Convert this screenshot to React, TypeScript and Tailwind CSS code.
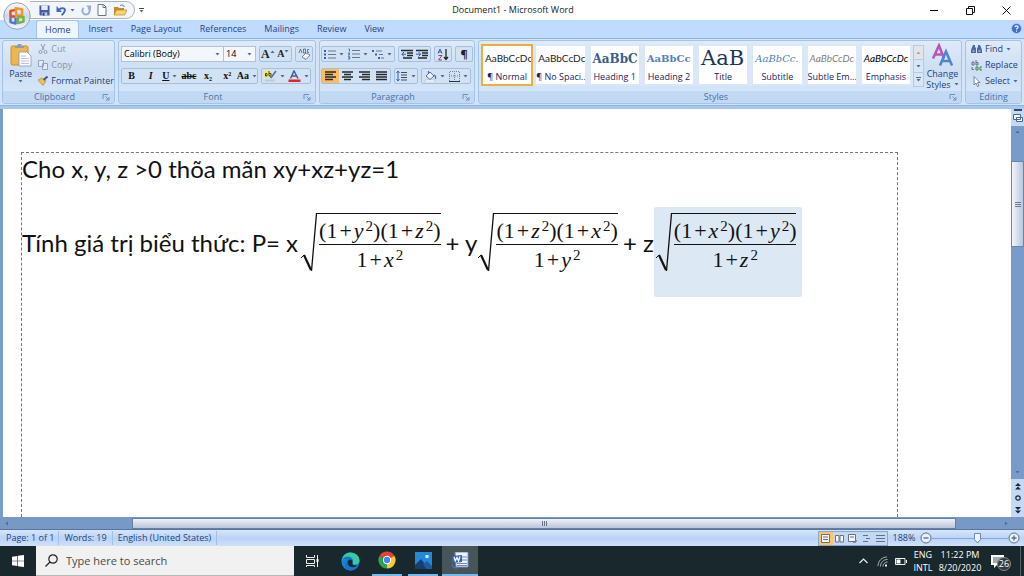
import React from "react";

type StyleItem = {
  name: string;
  sample: string;
  look: string;
  active?: boolean;
};

const tabs = ["Home", "Insert", "Page Layout", "References", "Mailings", "Review", "View"];

const styleItems: StyleItem[] = [
  { name: "¶ Normal", sample: "AaBbCcDc", look: "font-['Lato',sans-serif] text-[10px] text-[#222]", active: true },
  { name: "¶ No Spaci...", sample: "AaBbCcDc", look: "font-['Lato',sans-serif] text-[10px] text-[#222]" },
  { name: "Heading 1", sample: "AaBbC", look: "font-['DejaVu_Serif',serif] text-[12px] font-bold text-[#365f91]" },
  { name: "Heading 2", sample: "AaBbCc", look: "font-['DejaVu_Serif',serif] text-[10px] font-bold text-[#4f81bd]" },
  { name: "Title", sample: "AaB", look: "font-['DejaVu_Serif',serif] text-[21px] text-[#17365d]" },
  { name: "Subtitle", sample: "AaBbCc.", look: "font-['DejaVu_Serif',serif] text-[10px] italic text-[#4f81bd]" },
  { name: "Subtle Em...", sample: "AaBbCcDc", look: "font-['Lato',sans-serif] text-[10px] italic text-[#808080]" },
  { name: "Emphasis", sample: "AaBbCcDc", look: "font-['Lato',sans-serif] text-[10px] italic text-black" },
];

const Caret: React.FC<{ className?: string }> = ({ className = "" }) => (
  <svg aria-hidden viewBox="0 0 5 3" className={`h-[3px] w-[5px] shrink-0 ${className}`}>
    <path d="M0.5 0h4L2.5 2.6z" fill="#4f6b95" />
  </svg>
);

const Launcher: React.FC = () => (
  <button aria-label="More options" className="h-[8px] w-[8px]">
    <svg viewBox="0 0 8 8" className="h-[8px] w-[8px]" fill="none" stroke="#6d8fbe">
      <path d="M1 6V1.5h5M3.500 3.500l3 3M7 4v3H4" />
    </svg>
  </button>
);

const Group: React.FC<{
  label: string;
  className: string;
  launcher?: boolean;
  children: React.ReactNode;
}> = ({ label, className, launcher = true, children }) => (
  <section
    aria-label={label}
    className={`flex h-[64px] flex-col overflow-hidden rounded-[3px] border border-[#a3c3ea] bg-linear-to-b from-[#dfeaf8] via-[#ccdef3] to-[#d9eafd] ${className}`}
  >
    <div className="flex min-h-0 flex-1">{children}</div>
    <div className="flex h-[12px] items-center bg-[#c1d9f2] px-1 text-[9px] leading-[12px] text-[#4a6fa8]">
      <span className="flex-1 text-center">{label}</span>
      {launcher && <Launcher />}
    </div>
  </section>
);

const Cluster: React.FC<{ children: React.ReactNode; className?: string }> = ({ children, className = "" }) => (
  <div className={`flex h-[16px] items-stretch rounded-[2px] border border-[#a4bfe0] bg-[#d2e2f5] ${className}`}>
    {children}
  </div>
);

const Tool: React.FC<{ label: string; className?: string; children: React.ReactNode }> = ({
  label,
  className = "",
  children,
}) => (
  <button aria-label={label} className={`flex flex-1 items-center justify-center gap-[3px] ${className}`}>
    {children}
  </button>
);

const Lines: React.FC<{ kind: "left" | "center" | "right" | "justify" }> = ({ kind }) => {
  const d = {
    left: "M0 1h11M0 3.500h8M0 6h11M0 8.500h8",
    center: "M0 1h11M2 3.500h7M0 6h11M2 8.500h7",
    right: "M0 1h11M3 3.500h8M0 6h11M3 8.500h8",
    justify: "M0 1h11M0 3.500h11M0 6h11M0 8.500h11",
  }[kind];
  return (
    <svg viewBox="0 0 11 10" className="h-[10px] w-[11px]">
      <path d={d} stroke="#26282c" strokeWidth="1.4" />
    </svg>
  );
};

const ListIcon: React.FC<{ multi?: boolean }> = ({ multi }) => (
  <svg viewBox="0 0 12 11" className="h-[11px] w-[12px]">
    <path d={multi ? "M0 2h2M3 5.500h2M6 9h2" : "M0 2h2M0 5.500h2M0 9h2"} stroke="#3560b0" strokeWidth="2" />
    <path d={multi ? "M4 2h6M7 5.500h4M9 9h3" : "M4 2h8M4 5.500h8M4 9h8"} stroke="#6a7689" />
  </svg>
);

const NumberIcon: React.FC = () => (
  <svg viewBox="0 0 12 12" className="h-[12px] w-[12px]" fill="none">
    <path d="M0.500 1h1v2.500M0 5h1.800L0.300 7h1.700M0 8.700h1.700v2.300H0M0.500 9.900h1" stroke="#3560b0" strokeWidth=".9" />
    <path d="M4 2.500h8M4 6h8M4 9.500h8" stroke="#6a7689" />
  </svg>
);

const IndentIcon: React.FC<{ out?: boolean }> = ({ out }) => (
  <svg viewBox="0 0 12 11" className="h-[11px] w-[12px]">
    <path d="M0 1.500h12M6 4h6M6 6.500h6M2 9h9" stroke="#25282e" strokeWidth="1.300" />
    <path d={out ? "M5 5.200H1M3 3L0.800 5.200 3 7.500" : "M0 5.200h4M2.500 3l2.200 2.200L2.500 7.500"} stroke="#2c57b0" fill="none" />
  </svg>
);

const TitleBar: React.FC = () => (
  <header className="flex h-5 items-center bg-white">
    <div className="flex h-5 w-[148px] items-center">
      <div className="ml-[30px] flex h-[18px] items-center gap-[6px] rounded-r-full border border-l-0 border-[#a9b4c4] bg-[#f2f5fa] pr-[7px] pl-[9px]">
        <button aria-label="Save">
          <svg viewBox="0 0 12 12" className="h-[11px] w-[11px]">
            <path d="M0.500 0.500h11v11h-10l-1-1z" fill="#4357b5" />
            <path d="M2.500 0.500h7v5h-7z" fill="#e8efff" />
            <path d="M3 8h6v3.500H3z" fill="#c4cbe8" />
            <path d="M4 8.500h2v3H4z" fill="#26357f" />
          </svg>
        </button>
        <button aria-label="Undo" className="flex items-center gap-[3px]">
          <svg viewBox="0 0 11 11" className="h-[11px] w-[11px]" fill="none">
            <path d="M3 4.500C7 2 10 3.500 8.500 6.500 8 8 6.500 9.500 5.500 10" stroke="#4568c4" strokeWidth="2" />
            <path d="M0.500 1v6h5.500z" fill="#4568c4" />
          </svg>
          <Caret />
        </button>
        <button aria-label="Repeat">
          <svg viewBox="0 0 10 11" className="h-[11px] w-[10px]" fill="none">
            <path d="M2.500 3C0 6 2 9.500 5 9.500S10 6 7.500 3" stroke="#98aed4" strokeWidth="2" />
            <path d="M5 0.500h5v5z" fill="#98aed4" />
          </svg>
        </button>
        <button aria-label="New">
          <svg viewBox="0 0 10 12" className="h-[12px] w-[10px]">
            <path d="M1 0.500h5.500L9 3v8.500H1z" fill="#fff" stroke="#68789a" />
            <path d="M6 0.500V3.500h3" fill="none" stroke="#68789a" />
          </svg>
        </button>
        <button aria-label="Open">
          <svg viewBox="0 0 14 12" className="h-[12px] w-[14px]">
            <path d="M1 3h4l1 1h5v7H1z" fill="#c58b28" />
            <path d="M3.500 6H14l-2.500 5H1z" fill="#ffd567" stroke="#b98525" strokeWidth=".7" />
            <path d="M7 2c2-2 4-1 4 1" stroke="#55709f" fill="none" />
          </svg>
        </button>
      </div>
      <button aria-label="Customize toolbar" className="ml-[4px] flex flex-col items-center gap-px">
        <span className="h-px w-[5px] bg-[#3c4b66]" />
        <Caret />
      </button>
    </div>
    <h1 className="flex-1 text-center text-[9px] text-[#222]">Document1 - Microsoft Word</h1>
    <div className="flex h-5 w-[146px] justify-end">
      <button aria-label="Minimize" className="flex w-9 items-center justify-center">
        <span className="h-px w-[8px] bg-black" />
      </button>
      <button aria-label="Restore" className="flex w-9 items-center justify-center">
        <svg viewBox="0 0 9 9" className="h-[9px] w-[9px]" fill="none" stroke="#111">
          <path d="M0.500 2.500h6v6h-6zM2.500 2.500v-2h6v6h-2" />
        </svg>
      </button>
      <button aria-label="Close" className="flex w-9 items-center justify-center">
        <svg viewBox="0 0 9 9" className="h-[9px] w-[9px]" fill="none" stroke="#111">
          <path d="M0.500 0.500l8 8M8.500 0.500l-8 8" />
        </svg>
      </button>
    </div>
  </header>
);

const OfficeButton: React.FC = () => (
  <button aria-label="Office Button" className="absolute top-[2px] left-[3px] z-10">
    <svg viewBox="0 0 30 30" className="h-[28px] w-[28px]">
      <defs>
        <linearGradient id="orb" x1="0" y1="0" x2="0" y2="1">
          <stop offset="0" stopColor="#fbfcfe" />
          <stop offset=".5" stopColor="#cfd8e6" />
          <stop offset="1" stopColor="#f2f6fc" />
        </linearGradient>
      </defs>
      <circle cx="15" cy="15" r="14.200" fill="url(#orb)" stroke="#8d9db5" />
      <g fill="none" strokeWidth="2.600" strokeLinejoin="round">
        <path d="M13.500 8.500L8 9.500v6h5.500" stroke="#dd4f22" />
        <path d="M13.500 6.500l7 1.500v6.500h-6z" stroke="#f0972a" />
        <path d="M8 16.500v5l5.500 1.500v-6" stroke="#4a78d0" />
        <path d="M16 16h6v5l-6 1.500z" stroke="#74b443" />
      </g>
    </svg>
  </button>
);

const TabRow: React.FC = () => (
  <nav className="flex h-[18px] items-end bg-[#bfdbff] pr-[2px] pl-[36px] text-[9px] text-[#1f4487]">
    {tabs.map((t, i) => (
      <a
        key={t}
        href={`#${t}`}
        className={
          i === 0
            ? "flex h-[18px] items-center rounded-t-[3px] border border-b-0 border-[#a5c2e8] bg-[#eff5fd] px-2"
            : "flex h-[18px] items-center px-[9px]"
        }
      >
        {t}
      </a>
    ))}
    <button aria-label="Help" className="mb-[4px] ml-auto">
      <svg viewBox="0 0 12 12" className="h-[11px] w-[11px]">
        <circle cx="6" cy="6" r="5.500" fill="#3f6fd0" stroke="#b9cdf0" />
        <path d="M4.300 4.500C4.500 2.500 8 2.700 7.700 4.700 7.500 5.700 6 5.800 6 7.200M6 8.300v1.200" stroke="#fff" strokeWidth="1.200" fill="none" />
      </svg>
    </button>
  </nav>
);

const Ribbon: React.FC = () => (
  <div className="mb-[3px] flex gap-[3px] border-y border-[#8db2e3] bg-[#d3e4f8] px-[2px] py-px text-[9px] text-[#1f3f7d]">
    <Group label="Clipboard" className="w-[113px]">
      <button className="flex w-[38px] flex-col items-center pt-[2px]">
        <svg viewBox="0 0 22 24" className="h-[24px] w-[22px]">
          <rect x="1" y="3" width="17" height="19" rx="1.500" fill="#eeb64f" stroke="#c68c31" />
          <path d="M5 5V3h2l1-2h3l1 2h2v2z" fill="#8e9bb0" />
          <path d="M9 9h8l4 4v10H9z" fill="#fbfcff" stroke="#8399c0" strokeWidth=".8" />
          <path d="M11 13h5M11 15.500h8M11 18h8M11 20.500h8" stroke="#a6b6d4" strokeWidth=".8" />
        </svg>
        <span className="leading-[13px]">Paste</span>
        <Caret />
      </button>
      <div className="flex flex-1 flex-col leading-[16px]">
        <button className="flex h-[16px] items-center gap-[3px] text-[#8d95a3]">
          <svg viewBox="0 0 10 10" className="h-[10px] w-[10px]" fill="none" stroke="#8f9bae">
            <path d="M3 0l3 6M7 0L4 6" />
            <circle cx="2.500" cy="8" r="1.500" />
            <circle cx="7.500" cy="8" r="1.500" />
          </svg>
          Cut
        </button>
        <button className="flex h-[16px] items-center gap-[3px] text-[#8d95a3]">
          <svg viewBox="0 0 10 10" className="h-[10px] w-[10px]" fill="#e6ebf3" stroke="#96a3b8">
            <path d="M0.500 0.500h5v6h-5zM4.500 3.500h5v6h-5z" />
          </svg>
          Copy
        </button>
        <button className="flex h-[16px] items-center gap-[2px] whitespace-nowrap">
          <svg viewBox="0 0 11 10" className="h-[10px] w-[11px]">
            <path d="M0 4l4-2 4 3-3 4.500z" fill="#f0c24e" stroke="#a47a1f" strokeWidth=".6" />
            <path d="M5.500 4l4-3.500" stroke="#44528a" strokeWidth="2" />
          </svg>
          Format Painter
        </button>
      </div>
    </Group>

    <Group label="Font" className="w-[198px]">
      <div className="flex flex-1 flex-col gap-[6px] px-[2px] pt-[5px]">
        <div className="flex gap-[3px]">
          <div className="flex h-[16px] border border-[#abc1de] bg-[#f3f7fc] text-black">
            <label className="flex w-[101px] items-center pr-[3px]">
              <select aria-label="Font name" className="h-[14px] flex-1 appearance-none pl-[2px] text-[9px] leading-[14px]">
                <option>Calibri (Body)</option>
              </select>
              <Caret />
            </label>
            <label className="flex w-[32px] items-center border-l border-[#abc1de] pr-[3px]">
              <select aria-label="Font size" className="h-[14px] w-5 flex-1 appearance-none pl-[2px] text-[9px] leading-[14px]">
                <option>14</option>
              </select>
              <Caret />
            </label>
          </div>
          <Cluster className="w-[33px] font-['Liberation_Serif',serif] font-bold text-[#222]">
            <button aria-label="Grow font" className="flex flex-1 items-center justify-center">
              <span className="text-[12px] leading-none">A</span>
              <Caret className="mb-[6px] rotate-180" />
            </button>
            <button aria-label="Shrink font" className="flex flex-1 items-center justify-center">
              <span className="text-[10px] leading-none">A</span>
              <Caret className="mb-[6px]" />
            </button>
          </Cluster>
          <Cluster className="w-[18px]">
            <Tool label="Clear formatting">
              <svg viewBox="0 0 13 12" className="h-[12px] w-[13px]">
                <path d="M1 5l1.500-4L4 5M5.500 1v4h2v-4zM11 1.500H9.500v3H11" stroke="#536078" fill="none" strokeWidth=".8" />
                <path d="M4 9l4-4 4 2-4 4.500z" fill="#f4f6fb" stroke="#5d6d8e" strokeWidth=".8" />
              </svg>
            </Tool>
          </Cluster>
        </div>
        <div className="flex gap-[3px]">
          <Cluster className="w-[137px] font-['Liberation_Serif',serif] text-[10px] leading-none text-[#111]">
            <Tool label="Bold"><b className="font-black">B</b></Tool>
            <Tool label="Italic"><i className="font-bold">I</i></Tool>
            <Tool label="Underline"><u className="font-bold">U</u><Caret /></Tool>
            <Tool label="Strikethrough"><s className="font-bold">abc</s></Tool>
            <Tool label="Subscript"><b>x₂</b></Tool>
            <Tool label="Superscript"><b>x²</b></Tool>
            <Tool label="Change case"><b>Aa</b><Caret /></Tool>
          </Cluster>
          <Cluster className="w-[50px]">
            <Tool label="Highlight">
              <svg viewBox="0 0 13 12" className="h-[12px] w-[13px]">
                <path d="M0 1h8v6H0z" fill="#f8ee4e" />
                <path d="M1.500 3.500h1.500v2.500H1.500zM5 1v5h2V3.500H5" fill="none" stroke="#333" strokeWidth=".9" />
                <path d="M12 1L8 6.500 6.500 8" stroke="#596e96" strokeWidth="1.600" />
                <path d="M1 9.500h10v2H1z" fill="#c5c9cf" />
              </svg>
              <Caret />
            </Tool>
            <Tool label="Font color">
              <svg viewBox="0 0 13 12" className="h-[12px] w-[13px]">
                <path d="M2.500 8.500L6 1l4 7.500M4 6h5" fill="none" stroke="#3c5da0" strokeWidth="1.500" />
                <path d="M0.500 9.500h12V12H0.500z" fill="#ef1c24" />
              </svg>
              <Caret />
            </Tool>
          </Cluster>
        </div>
      </div>
    </Group>

    <Group label="Paragraph" className="w-[156px]">
      <div className="flex flex-1 flex-col gap-[6px] px-[1px] pt-[5px]">
        <div className="flex gap-[3px]">
          <Cluster className="w-[74px]">
            <Tool label="Bullets"><ListIcon /><Caret /></Tool>
            <Tool label="Numbering"><NumberIcon /><Caret /></Tool>
            <Tool label="Multilevel list"><ListIcon multi /><Caret /></Tool>
          </Cluster>
          <Cluster className="w-[33px]">
            <Tool label="Decrease indent"><IndentIcon out /></Tool>
            <Tool label="Increase indent"><IndentIcon /></Tool>
          </Cluster>
          <Cluster className="w-[18px]">
            <Tool label="Sort">
              <svg viewBox="0 0 12 13" className="h-[13px] w-[12px]" fill="none">
                <path d="M1 5.500L3 1l2 4.500M1.500 4h3" stroke="#3659a8" />
                <path d="M1.500 7.500H5L1.500 12H5" stroke="#a33c5c" />
                <path d="M9 1v10M7 9l2 2.500L11 9" stroke="#222" strokeWidth="1.300" />
              </svg>
            </Tool>
          </Cluster>
          <Cluster className="w-[18px] text-[11px] font-bold text-[#222]">
            <Tool label="Show marks">¶</Tool>
          </Cluster>
        </div>
        <div className="flex gap-[3px]">
          <Cluster className="w-[70px]">
            <Tool label="Align left" className="bg-[#fbbd62]"><Lines kind="left" /></Tool>
            <Tool label="Center"><Lines kind="center" /></Tool>
            <Tool label="Align right"><Lines kind="right" /></Tool>
            <Tool label="Justify"><Lines kind="justify" /></Tool>
          </Cluster>
          <Cluster className="w-[24px]">
            <Tool label="Line spacing">
              <svg viewBox="0 0 12 12" className="h-[12px] w-[12px]" fill="none">
                <path d="M2 1v10M0.500 3L2 1l1.500 2M0.500 9L2 11l1.500-2" stroke="#3560b0" />
                <path d="M5 2.500h6M5 5h6M5 7.500h6M5 10h6" stroke="#444c59" />
              </svg>
              <Caret />
            </Tool>
          </Cluster>
          <Cluster className="w-[50px]">
            <Tool label="Shading">
              <svg viewBox="0 0 13 12" className="h-[12px] w-[13px]">
                <path d="M2 6l4-4 4 4-4 3.500z" fill="#eef2f8" stroke="#5e6f90" />
                <path d="M4.500 4V1M10 5c2 1 2 2 1.500 4" stroke="#4f6da8" fill="none" strokeWidth="1.200" />
                <path d="M1 10h10v2H1z" fill="#fff" stroke="#9aabc4" strokeWidth=".5" />
              </svg>
              <Caret />
            </Tool>
            <Tool label="Borders">
              <svg viewBox="0 0 11 11" className="h-[11px] w-[11px]" fill="none">
                <path d="M0.500 10V0.500h10V10M5.500 0v10M0 5h11" stroke="#7385a3" strokeDasharray="1 1" />
                <path d="M0 10.500h11" stroke="#26303f" />
              </svg>
              <Caret />
            </Tool>
          </Cluster>
        </div>
      </div>
    </Group>

    <Group label="Styles" className="min-w-0 flex-1">
      <div className="flex min-w-0 flex-1 pt-[3px] pl-[2px]">
        {styleItems.map((s) => (
          <button
            key={s.name}
            className={`flex h-[42px] min-w-0 flex-1 flex-col overflow-hidden bg-white text-[#1c1c62] ${
              s.active ? "border-2 border-[#eeae3c]" : "border-x-[3px] border-y-2 border-[#dae7f6]"
            }`}
          >
            <span className={`flex h-[25px] w-full items-center overflow-hidden pl-[2px] whitespace-nowrap ${s.look}`}>
              {s.sample}
            </span>
            <span className="w-full text-center text-[9px] leading-[12px] whitespace-nowrap">{s.name}</span>
          </button>
        ))}
      </div>
      <div className="mt-[4px] flex h-[42px] w-[11px] flex-col border border-[#b4cae6] bg-[#d8e6f6]">
        <button aria-label="Previous row" className="flex flex-1 items-center justify-center bg-[#e5e5e8]"><Caret className="rotate-180 opacity-50" /></button>
        <button aria-label="Next row" className="flex flex-1 items-center justify-center border-y border-[#b4cae6]"><Caret /></button>
        <button aria-label="More styles" className="flex flex-1 flex-col items-center justify-center gap-px">
          <span className="h-px w-[5px] bg-[#4f6b95]" />
          <Caret />
        </button>
      </div>
      <button className="flex w-[37px] flex-col items-center pt-[2px] leading-[12px]">
        <svg viewBox="0 0 24 24" className="h-[25px] w-[24px]" fill="none">
          <path d="M2 15L8 2l5 13M4 11h7" stroke="#b657b5" strokeWidth="2.600" />
          <path d="M9 22l6-14 6 14M11 17.500h8" stroke="#4d86d2" strokeWidth="2.600" />
        </svg>
        <span className="h-[11px]">Change</span>
        <span className="flex h-[11px] items-center gap-[3px]">Styles <Caret /></span>
      </button>
    </Group>

    <Group label="Editing" className="w-[57px]" launcher={false}>
      <div className="flex flex-1 flex-col pl-[5px]">
        <button className="flex h-[16px] items-center gap-[3px]">
          <svg viewBox="0 0 11 10" className="h-[10px] w-[11px]" fill="#4b689f">
            <path d="M2 1h2v2l1 1v5H0V6zM7 1h2l2 5v3H6V4l1-1z" />
            <path d="M1.500 7h2M7.500 7h2" stroke="#d7e3f5" />
          </svg>
          Find <Caret />
        </button>
        <button className="flex h-[16px] items-center gap-[2px]">
          <svg viewBox="0 0 12 11" className="h-[11px] w-[12px]" fill="none">
            <path d="M1 2h2v3H1zM5 0v5h2V2.500H5M1 7v2.500h2" stroke="#5f6f8d" />
            <path d="M5 7h2v3H5zM11 7H9v3h2" stroke="#3f8247" />
          </svg>
          Replace
        </button>
        <button className="flex h-[16px] items-center gap-[3px]">
          <svg viewBox="0 0 11 11" className="h-[11px] w-[11px]">
            <path d="M3 0.500v8.500l2-2 1.500 3.500 1.500-.7L6.500 6.500H9z" fill="#fff" stroke="#687a9a" strokeWidth=".9" />
          </svg>
          Select <Caret />
        </button>
      </div>
    </Group>
  </div>
);

const Sq: React.FC<{ v: string }> = ({ v }) => (
  <span>
    1<span className="mx-[2px]">+</span>
    <i>{v}</i>
    <span className="ml-[2px] align-[7px] text-[15px] leading-none">2</span>
  </span>
);

const Root: React.FC<{ a: string; b: string; c: string }> = ({ a, b, c }) => (
  <span className="flex font-['Liberation_Serif','Times_New_Roman',serif] text-[22px]">
    <svg aria-hidden viewBox="0 0 16 59" className="h-[59px] w-[16px] shrink-0" fill="none" stroke="#111">
      <path d="M0 45l3-3" />
      <path d="M3 42l7 15" strokeWidth="2.200" />
      <path d="M10.500 58L15.500 0.500h1" strokeWidth="1.300" />
    </svg>
    <span className="flex h-[59px] flex-col border-t border-[#111] pl-[2px] text-center whitespace-nowrap">
      <span className="h-[31px] border-b border-[#111] leading-[34px]">
        (<Sq v={a} />)(<Sq v={b} />)
      </span>
      <span className="h-[27px] leading-[30px]">
        <Sq v={c} />
      </span>
    </span>
  </span>
);

const DocumentArea: React.FC = () => (
  <div className="flex min-h-0 flex-1 bg-[#7d9dc9]">
    <main className="ml-[3px] flex min-w-0 flex-1 flex-col overflow-hidden bg-white pt-[43px] pr-[113px] pl-[18px]">
      <article className="flex-1 border border-b-0 border-dashed border-[#777] font-['Lato','Open_Sans',sans-serif] text-[24px] text-[#111]">
        <p className="leading-[32px] whitespace-nowrap">Cho x, y, z &gt;0 thõa mãn xy+xz+yz=1</p>
        <p className="mt-[22px] flex items-start leading-[32px] whitespace-nowrap">
          <span className="pt-[20px]">Tính giá trị biểu thức: P= x</span>
          <span className="pt-[6px] pl-[3px]"><Root a="y" b="z" c="x" /></span>
          <span className="pt-[20px] pr-[1px] pl-[5px]">+ y</span>
          <span className="pt-[6px]"><Root a="z" b="x" c="y" /></span>
          <span className="pt-[20px] pl-[5px]">+ z</span>
          <span className="rounded-[2px] bg-[#dce8f4] pt-[6px] pr-[6px] pb-[25px] pl-[2px]"><Root a="x" b="y" c="z" /></span>
        </p>
      </article>
    </main>
    <div className="flex w-[13px] flex-col items-center bg-[#789bca]">
      <div className="flex h-[17px] w-full flex-col items-center bg-[#c5d9f3]">
        <span className="h-[2px] w-[8px] bg-[#31486f]" />
        <svg aria-hidden viewBox="0 0 10 10" className="mt-[2px] h-[10px] w-[10px]" fill="#f5f8fd" stroke="#4c6692">
          <path d="M0.500 1.500h7v5h-7zM3.500 4.500h6v4h-6z" />
        </svg>
      </div>
      <Caret className="mt-[4px] rotate-180" />
      <div className="mt-[28px] flex h-[86px] w-full flex-col items-center justify-center gap-px border border-[#6a84ac] bg-linear-to-r from-[#f3f6fb] to-[#b7c7de]">
        <span className="h-px w-[6px] bg-[#6a7c9a]" />
        <span className="h-px w-[6px] bg-[#6a7c9a]" />
        <span className="h-px w-[6px] bg-[#6a7c9a]" />
      </div>
      <Caret className="mt-auto mb-[5px]" />
      <div className="flex h-[38px] w-full items-center justify-center bg-[#c5d9f3]">
        <svg aria-hidden viewBox="0 0 8 34" className="h-[34px] w-[8px]" fill="#16253f">
          <path d="M4 2l3 3H1zM4 5.500l3 3H1zM1 26h6l-3 3zM1 29.500h6l-3 3z" />
          <circle cx="4" cy="17" r="2.200" fill="none" stroke="#16253f" strokeWidth="1.200" />
        </svg>
      </div>
    </div>
  </div>
);

const HScroll: React.FC = () => (
  <div className="flex h-[12px] items-center bg-[#7898c6] pr-[15px] pl-[4px]">
    <Caret className="rotate-90" />
    <div className="ml-[123px] flex h-[11px] flex-1 items-center justify-center gap-px border border-[#6a7f9f] bg-linear-to-b from-[#eff2f8] to-[#b9c5d8]">
      <span className="h-[5px] w-px bg-[#65748c]" />
      <span className="h-[5px] w-px bg-[#65748c]" />
      <span className="h-[5px] w-px bg-[#65748c]" />
    </div>
    <Caret className="ml-[48px] -rotate-90" />
  </div>
);

const StatusBar: React.FC = () => (
  <div className="flex h-[17px] items-center border-t border-[#5674a8] bg-linear-to-b from-[#d7e6f9] via-[#b9d3f7] to-[#cfe1fa] pr-[4px] pl-[2px] text-[9px] text-[#1f3f7d]">
    <span className="border-r border-[#a5bfe2] px-[4px]">Page: 1 of 1</span>
    <span className="border-r border-[#a5bfe2] px-[5px]">Words: 19</span>
    <span className="border-r border-[#a5bfe2] px-[5px]">English (United States)</span>
    <div className="ml-auto flex h-[15px] w-[70px] items-stretch border border-[#88a6d2] bg-[#c3d8f3]">
      {["Print Layout", "Full Screen Reading", "Web Layout", "Outline", "Draft"].map((v, i) => (
        <button key={v} aria-label={v} className={`flex flex-1 items-center justify-center ${i === 0 ? "bg-[#fcc469]" : ""}`}>
          <svg viewBox="0 0 9 9" className="h-[9px] w-[9px]" fill={i < 3 ? "#f5f7fb" : "none"} stroke="#68707f">
            {i === 0 && <path d="M0.500 0.500h8v8h-8zM2 3h5M2 5.500h5" />}
            {i === 1 && <path d="M0.500 1.500h3.500v6.500H0.500zM5 1.500h3.500v6.500H5z" />}
            {i === 2 && <path d="M0.500 0.500h7v7h-7zM2 3h4M5 8a1.500 1.500 0 1 0 3-2" />}
            {i === 3 && <path d="M1 1.500h5M4 4.500h4M1 7.500h5" />}
            {i === 4 && <path d="M0 1.500h9M0 4.500h9M0 7.500h9" />}
          </svg>
        </button>
      ))}
    </div>
    <span className="w-[32px] text-center">188%</span>
    <button aria-label="Zoom out">
      <svg viewBox="0 0 12 12" className="h-[12px] w-[12px]" fill="#e9f0fa" stroke="#596f95">
        <circle cx="6" cy="6" r="5" />
        <path d="M3.500 6h5" strokeWidth="1.400" />
      </svg>
    </button>
    <div className="flex w-[76px] items-center">
      <span className="h-px w-[42px] bg-[#8ba6d2]" />
      <svg aria-hidden viewBox="0 0 7 11" className="h-[11px] w-[7px]" fill="#eef3fb" stroke="#6c87b5">
        <path d="M0.500 0.500h6v6l-3 3.500-3-3.500z" />
      </svg>
      <span className="h-px flex-1 bg-[#8ba6d2]" />
    </div>
    <button aria-label="Zoom in">
      <svg viewBox="0 0 12 12" className="h-[12px] w-[12px]" fill="#e9f0fa" stroke="#596f95">
        <circle cx="6" cy="6" r="5" />
        <path d="M3.500 6h5M6 3.500v5" strokeWidth="1.400" />
      </svg>
    </button>
  </div>
);

const Taskbar: React.FC = () => (
  <footer className="flex h-[30px] bg-[#19282c] text-white">
    <button aria-label="Start" className="flex w-[36px] items-center justify-center">
      <svg viewBox="0 0 12 12" className="h-[12px] w-[12px]" fill="#fff">
        <path d="M0 1.700l5.400-.8v4.800H0zM6 .8L12 0v5.700H6zM0 6.300h5.400v4.800L0 10.300zM6 6.300h6V12l-6-.8z" />
      </svg>
    </button>
    <label className="flex w-[258px] items-center gap-[8px] border-b border-[#b5b8ba] bg-[#f1f1f1] pl-[9px]">
      <svg aria-hidden viewBox="0 0 13 13" className="h-[13px] w-[13px] shrink-0" fill="none" stroke="#222" strokeWidth="1.200">
        <circle cx="8" cy="5" r="4.200" />
        <path d="M5 8L0.500 12.500" />
      </svg>
      <input
        aria-label="Search"
        placeholder="Type here to search"
        className="min-w-0 flex-1 pt-px text-[11px] placeholder:text-[#4a4a4a]"
      />
    </label>
    <button aria-label="Task View" className="flex w-[36px] items-center justify-center">
      <svg viewBox="0 0 13 12" className="h-[12px] w-[13px]" fill="none" stroke="#f0f0f0">
        <path d="M0.500 0v2.500h8V0M0.500 4.500h8v4h-8zM0.500 12v-1.500h8V12M11.500 0v12" />
        <path d="M10.500 4h2v3h-2z" fill="#fff" stroke="none" />
      </svg>
    </button>
    <button aria-label="Microsoft Edge" className="flex w-[40px] items-center justify-center">
      <svg viewBox="0 0 20 20" className="h-[19px] w-[19px]">
        <circle cx="10" cy="10" r="9.500" fill="#1684d6" />
        <path d="M0.600 9C2 2 7 .5 10 .5c6 0 9.500 4 9.500 8.500 0 3-2.500 4.500-5 4.500-2 0-3-1-2.500-2 1-3-1-5-4-5C5 6.500 2 7.500 .6 9z" fill="#38c9a4" />
        <path d="M0.600 9C2 5 7 4 10 5.500c3 1.500 3 4 2 6-.5 1 .5 2 2.500 2 1.500 0 3-.5 4-1.500-1 4-4.500 7.500-8.500 7.500-4 0-6-3-5.500-6 .3-3 2-4.500 3.500-5C5 6.500 2 7.500 .6 9z" fill="#1573c8" />
        <path d="M8 8.500c-2 2.500-1 7 4 7.500 2 .2 4-.5 5.500-2-1 .5-2 .3-3 0-2-.3-3-1.500-2.500-2.500.5-1.500-.5-3-2-3.500z" fill="#19282c" />
      </svg>
    </button>
    <button aria-label="Google Chrome" className="mr-[6px] ml-[2px] flex w-[30px] items-center justify-center border-b-2 border-[#76b9ed]">
      <svg viewBox="0 0 20 20" className="h-[18px] w-[18px]">
        <path d="M10 10L1.800 5.200A9.500 9.500 0 0 1 18.200 5.200z" fill="#e34133" />
        <path d="M10 10l8.200-4.800A9.500 9.500 0 0 1 10 19.500z" fill="#fcc934" />
        <path d="M10 10v9.500A9.500 9.500 0 0 1 1.800 5.200z" fill="#30a152" />
        <circle cx="10" cy="10" r="4.600" fill="#fff" />
        <circle cx="10" cy="10" r="3.500" fill="#4285f4" />
      </svg>
    </button>
    <button aria-label="Photos" className="mr-[4px] flex w-[30px] items-center justify-center border-b-2 border-[#76b9ed]">
      <svg viewBox="0 0 17 17" className="h-[17px] w-[17px]">
        <rect width="17" height="17" fill="#2389d9" />
        <path d="M0 13l6-6 8 10H0z" fill="#163f70" />
        <path d="M8 12l4-3 5 5v3h-6z" fill="#1c5da1" />
        <path d="M10.500 3h3v3h-3z" fill="#d5efff" />
      </svg>
    </button>
    <button aria-label="Document1 - Word" className="flex w-[36px] items-center justify-center border-b-2 border-[#76b9ed] bg-[#475559]">
      <svg viewBox="0 0 18 17" className="h-[17px] w-[18px]">
        <path d="M4 0h13v15H5z" fill="#eef2fb" stroke="#6e8cc9" />
        <path d="M11 5h5M11 8h5M6 11.500h10M6 13.500h10" stroke="#6987c4" />
        <path d="M1 4l10-1v7L1 11z" fill="#3a62b2" />
        <path d="M3 5l1.300 4L6 5.500 7.500 9 9 4.500" stroke="#fff" fill="none" strokeWidth="1.200" />
        <path d="M1 12c0 3 2 4 5 4" stroke="#5a7cc4" fill="none" />
      </svg>
    </button>
    <div className="ml-auto flex items-center text-[9px]">
      <svg aria-hidden viewBox="0 0 9 6" className="h-[6px] w-[9px]" fill="none" stroke="#eee" strokeWidth="1.200">
        <path d="M0.500 5l4-4 4 4" />
      </svg>
      <svg aria-hidden viewBox="0 0 11 11" className="ml-[9px] h-[11px] w-[11px]" fill="none" stroke="#aab2b5">
        <path d="M1 10C1 5 5 1 10 1M3.500 10.500c0-4 3-7 7-7M6 10.500C6 8 8 6 10.500 6" />
        <path d="M8 8.500h2v2H8z" fill="#fff" stroke="none" />
      </svg>
      <svg aria-hidden viewBox="0 0 12 7" className="ml-[7px] h-[7px] w-[12px]" fill="none" stroke="#f2f2f2">
        <path d="M0.500 0.500h9.500v6H0.500zM11.500 2v3" />
        <path d="M1.500 1.500h4v4h-4z" fill="#fff" stroke="none" />
      </svg>
      <div className="ml-[6px] w-[20px] text-center leading-[13px]">ENG<br />INTL</div>
      <div className="ml-[2px] w-[50px] text-center leading-[13px] whitespace-nowrap">11:22 PM<br />8/20/2020</div>
      <button aria-label="Notifications" className="relative mr-[9px] ml-[6px] h-[20px] w-[20px]">
        <svg viewBox="0 0 13 13" className="h-[13px] w-[13px]">
          <path d="M0 0h13v10H6l-3 3v-3H0z" fill="#fff" />
          <path d="M2 3h9M2 5h9M2 7h9" stroke="#19282c" strokeWidth=".8" />
        </svg>
        <span className="absolute right-0 bottom-0 flex h-[14px] w-[14px] items-center justify-center rounded-full border border-[#888] bg-[#303c40] text-[9px]">
          26
        </span>
      </button>
      <span className="h-[30px] w-px bg-[#566064]" />
      <span className="w-[3px]" />
    </div>
  </footer>
);

const App: React.FC = () => {
  return (
    <div className="relative flex h-screen flex-col overflow-hidden bg-[#a9c6ec] font-['Open_Sans','Noto_Sans',sans-serif]">
      <OfficeButton />
      <TitleBar />
      <TabRow />
      <Ribbon />
      <DocumentArea />
      <HScroll />
      <StatusBar />
      <Taskbar />
    </div>
  );
};

export default App;
